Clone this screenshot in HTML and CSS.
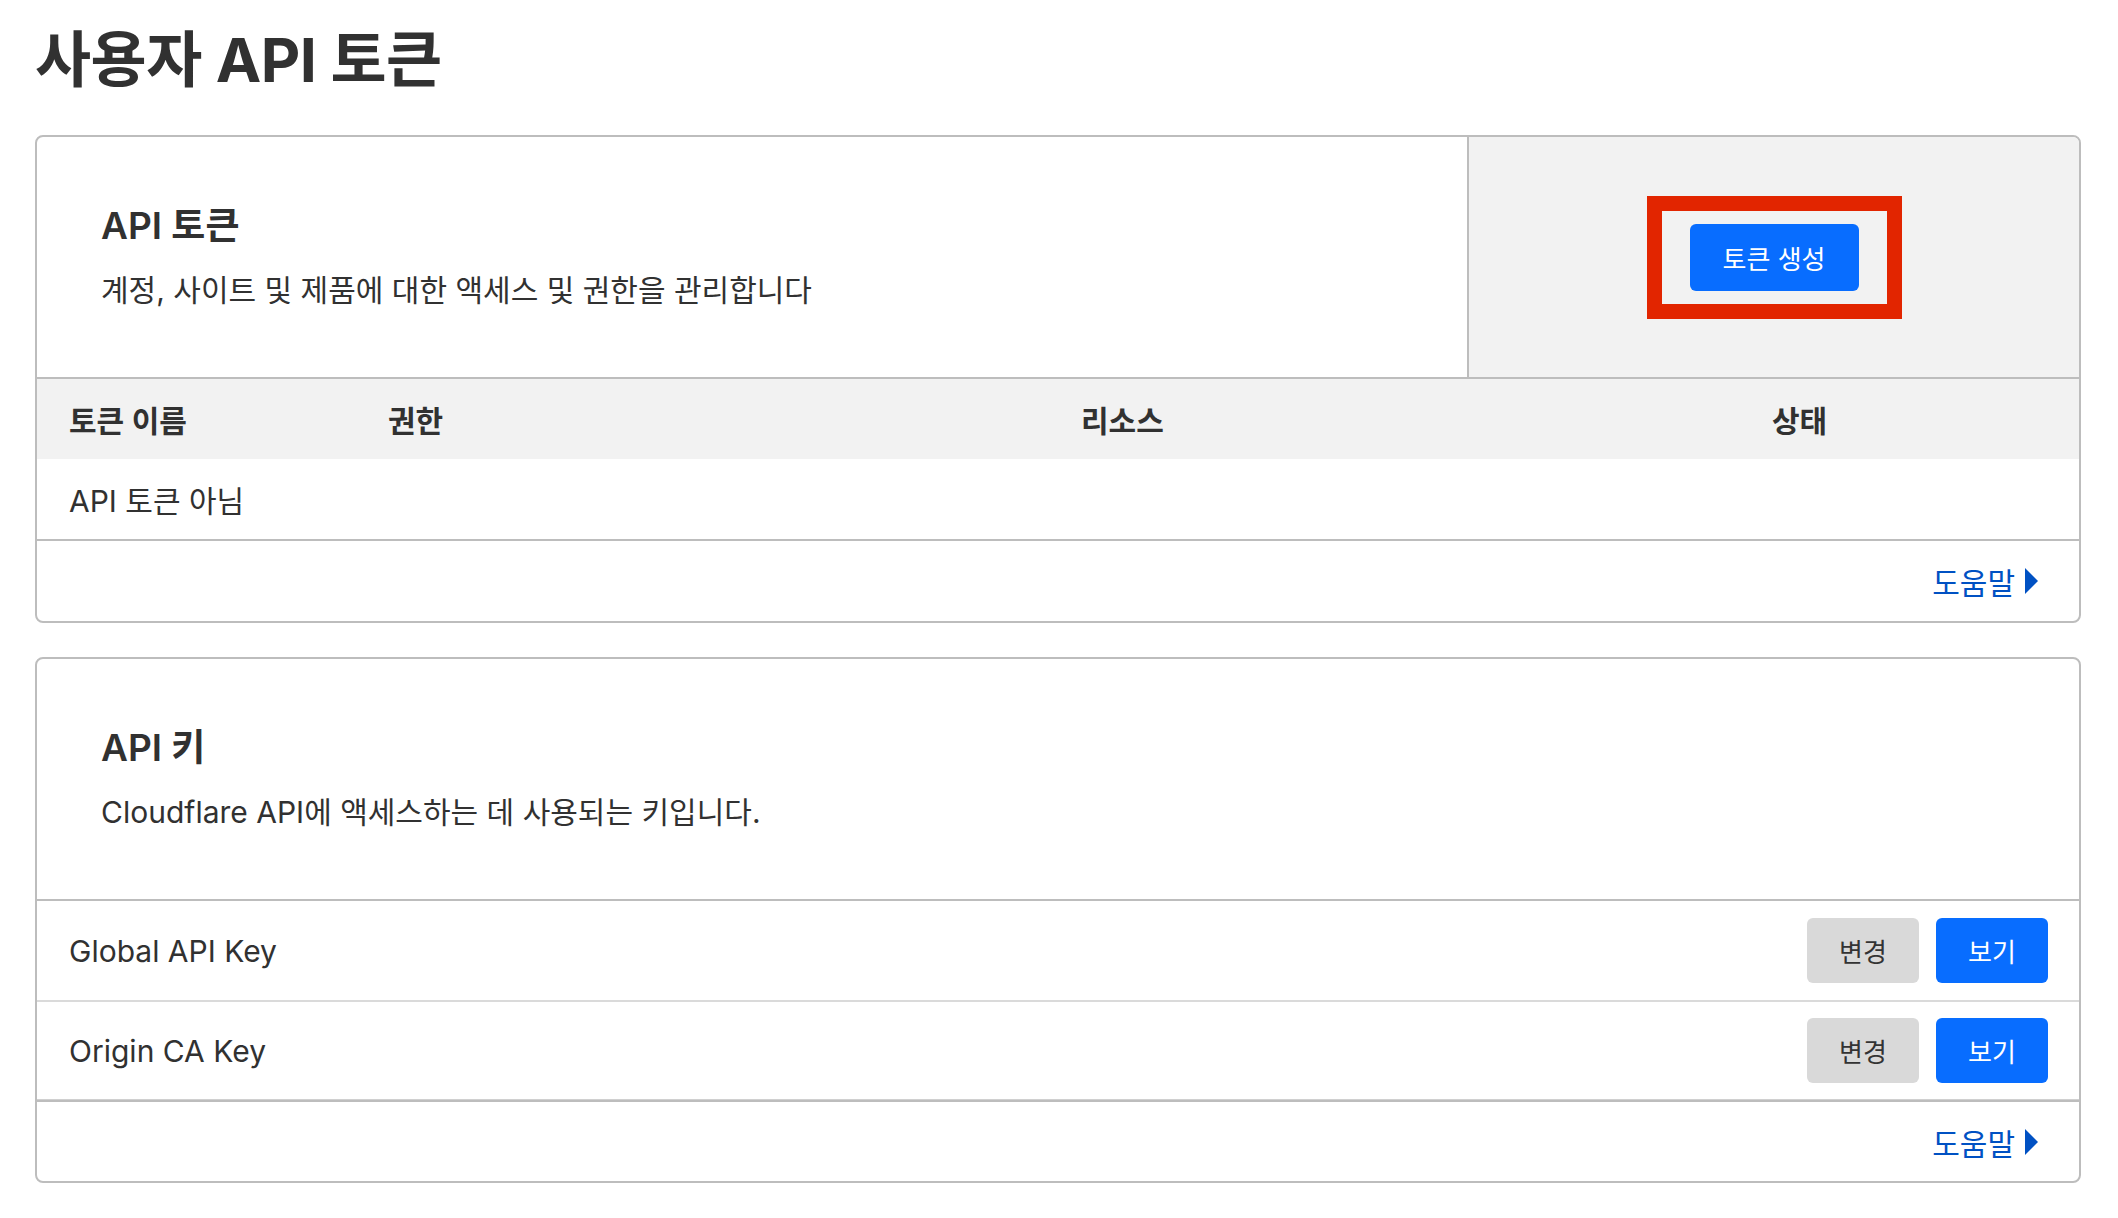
FILE: index.html
```html
<!DOCTYPE html>
<html lang="ko">
<head>
<meta charset="utf-8">
<title>사용자 API 토큰</title>
<link rel="stylesheet" href="styles.css">
</head>
<body>
<main class="page">
  <h1 class="page-title">사용자 API 토큰</h1>

  <section class="card">
    <div class="card-top">
      <div class="card-intro">
        <h2 class="card-title">API 토큰</h2>
        <p class="card-desc">계정, 사이트 및 제품에 대한 액세스 및 권한을 관리합니다</p>
      </div>
      <div class="card-aside">
        <div class="highlight">
          <button class="btn btn-primary btn-create">토큰 생성</button>
        </div>
      </div>
    </div>
    <div class="table-head">
      <div class="th">토큰 이름</div>
      <div class="th">권한</div>
      <div class="th">리소스</div>
      <div class="th">상태</div>
    </div>
    <div class="table-row">
      <div class="td">API 토큰 아님</div>
    </div>
    <div class="card-foot">
      <a class="help-link" href="#">도움말<svg class="tri" viewBox="0 0 13 26" width="13" height="26"><polygon points="0,0 13,13 0,26" fill="currentColor"/></svg></a>
    </div>
  </section>

  <section class="card">
    <div class="card-top">
      <div class="card-intro">
        <h2 class="card-title">API 키</h2>
        <p class="card-desc">Cloudflare API에 액세스하는 데 사용되는 키입니다.</p>
      </div>
    </div>
    <div class="key-row">
      <span class="key-name">Global API Key</span>
      <div class="key-actions">
        <button class="btn btn-secondary">변경</button>
        <button class="btn btn-primary">보기</button>
      </div>
    </div>
    <div class="key-row key-row-last">
      <span class="key-name">Origin CA Key</span>
      <div class="key-actions">
        <button class="btn btn-secondary">변경</button>
        <button class="btn btn-primary">보기</button>
      </div>
    </div>
    <div class="card-foot card-foot-keys">
      <a class="help-link" href="#">도움말<svg class="tri" viewBox="0 0 13 26" width="13" height="26"><polygon points="0,0 13,13 0,26" fill="currentColor"/></svg></a>
    </div>
  </section>
</main>
</body>
</html>
```

FILE: styles.css
```css
* { box-sizing: border-box; }

html, body {
  margin: 0;
  padding: 0;
  background: #ffffff;
}

body {
  font-family: Inter, "Noto Sans CJK KR", sans-serif;
  color: #313131;
  font-size: 30px;
}

.page {
  padding: 24px 37px 0 35px;
}

.page-title {
  margin: 0 0 39px 0;
  font-size: 61px;
  line-height: 72px;
  font-weight: 700;
  color: #313131;
  letter-spacing: -0.5px;
}

.card {
  border: 2px solid #bdbdbd;
  border-radius: 8px;
  overflow: hidden;
  margin-bottom: 34px;
  background: #fff;
}

.card-top {
  display: flex;
  height: 242px;
  border-bottom: 2px solid #bdbdbd;
}

.card-intro {
  flex: 1;
  padding: 67px 64px 0 64px;
}

.card-title {
  margin: 0;
  font-size: 37px;
  line-height: 44px;
  font-weight: 600;
  color: #313131;
}

.card-desc {
  margin: 21px 0 0 0;
  font-size: 30px;
  line-height: 42px;
  color: #313131;
}

.card-aside {
  width: 612px;
  background: #f2f2f2;
  border-left: 2px solid #bdbdbd;
  display: flex;
  align-items: center;
  justify-content: center;
}

.highlight {
  border: 15px solid #e22500;
  padding: 13px 28px;
  display: flex;
}

.btn {
  font-family: Inter, "Noto Sans CJK KR", sans-serif;
  font-size: 26px;
  border: none;
  border-radius: 6px;
  height: 65px;
  width: 112px;
  padding: 0;
  cursor: pointer;
}

.btn-primary {
  background: #086dff;
  color: #ffffff;
}

.btn-secondary {
  background: #d9d9d9;
  color: #333333;
}

.btn-create {
  width: 169px;
  height: 67px;
}

.table-head {
  display: grid;
  grid-template-columns: 319px 693px 691px 1fr;
  height: 80px;
  background: #f2f2f2;
  align-items: center;
}

.th {
  padding-left: 32px;
  font-weight: 600;
  font-size: 30px;
}

.table-row {
  height: 80px;
  display: flex;
  align-items: center;
  padding-left: 32px;
}

.card-foot {
  height: 82px;
  border-top: 2px solid #bdbdbd;
  display: flex;
  align-items: center;
  justify-content: flex-end;
  padding-right: 41px;
}

.card-foot-keys {
  height: 81px;
}

.help-link {
  display: flex;
  align-items: center;
  gap: 10px;
  color: #0051c3;
  text-decoration: none;
  font-size: 30px;
}

.tri {
  display: block;
  width: 13px;
  height: 26px;
}

.key-row {
  display: flex;
  align-items: center;
  justify-content: space-between;
  height: 100px;
  padding: 0 31px 0 32px;
  border-top: 2px solid #dadada;
}

.card-top + .key-row {
  border-top: none;
  height: 99px;
}

.key-row-last {
  border-bottom: 1px solid #d0d0d0;
}

.key-name {
  font-size: 30px;
}

.key-actions {
  display: flex;
  gap: 17px;
}
```
